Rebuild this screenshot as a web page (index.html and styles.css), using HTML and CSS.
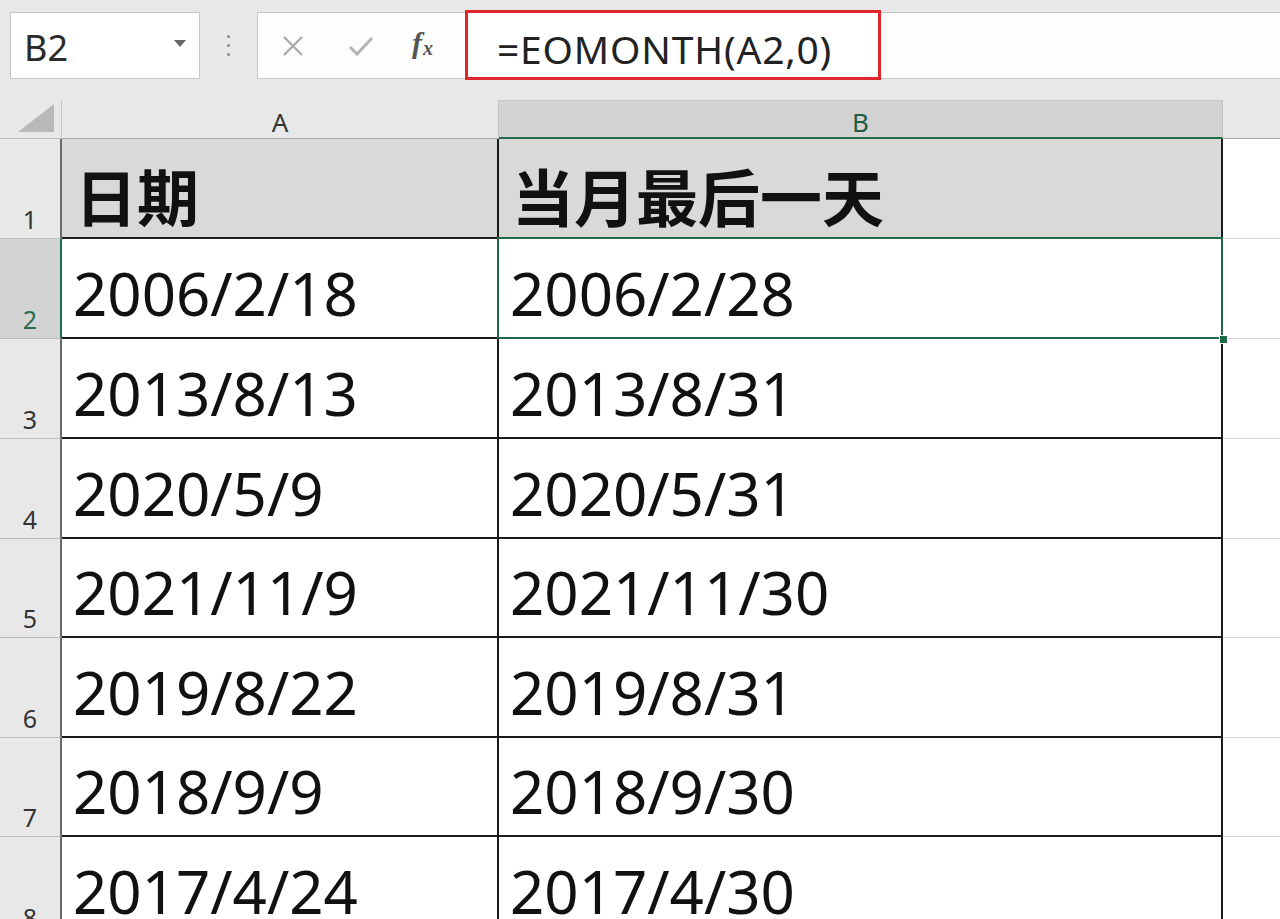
FILE: index.html
```html
<!DOCTYPE html>
<html lang="zh">
<head>
<meta charset="utf-8">
<title>EOMONTH</title>
<link rel="stylesheet" href="styles.css">
</head>
<body>
<div class="app">
  <div class="formula-row">
    <div class="namebox">
      <span class="name">B2</span>
      <svg class="caret" width="12" height="8" viewBox="0 0 12 8"><path d="M0 0 H12 L6 7 Z" fill="#666"/></svg>
    </div>
    <div class="sep"><i></i><i></i><i></i></div>
    <div class="fbar">
      <div class="btns">
        <svg class="ico" width="22" height="22" viewBox="0 0 22 22"><path d="M2 2 L20 20 M20 2 L2 20" stroke="#a8a8a8" stroke-width="2.2" fill="none"/></svg>
        <svg class="ico" width="26" height="22" viewBox="0 0 26 22"><path d="M2 12 L9 19 L24 3" stroke="#b4b4b4" stroke-width="3" fill="none"/></svg>
        <span class="fx">f<sub>x</sub></span>
      </div>
      <div class="formula">=EOMONTH(A2,0)</div>
      <div class="rest"></div>
    </div>
  </div>

  <div class="sheet">
    <div class="corner"><svg width="36" height="28" viewBox="0 0 36 28"><path d="M36 0 V28 H0 Z" fill="#b9b9b9"/></svg></div>
    <div class="colhead">A</div>
    <div class="colhead sel">B</div>
    <div class="colhead blank"></div>

    <div class="rowhead">1</div>
    <div class="cell head">日期</div>
    <div class="cell head">当月最后一天</div>
    <div class="cell empty"></div>

    <div class="rowhead sel">2</div>
    <div class="cell">2006/2/18</div>
    <div class="cell active">2006/2/28<span class="handle"></span></div>
    <div class="cell empty"></div>

    <div class="rowhead">3</div>
    <div class="cell">2013/8/13</div>
    <div class="cell">2013/8/31</div>
    <div class="cell empty"></div>

    <div class="rowhead">4</div>
    <div class="cell">2020/5/9</div>
    <div class="cell">2020/5/31</div>
    <div class="cell empty"></div>

    <div class="rowhead">5</div>
    <div class="cell">2021/11/9</div>
    <div class="cell">2021/11/30</div>
    <div class="cell empty"></div>

    <div class="rowhead">6</div>
    <div class="cell">2019/8/22</div>
    <div class="cell">2019/8/31</div>
    <div class="cell empty"></div>

    <div class="rowhead">7</div>
    <div class="cell">2018/9/9</div>
    <div class="cell">2018/9/30</div>
    <div class="cell empty"></div>

    <div class="rowhead">8</div>
    <div class="cell">2017/4/24</div>
    <div class="cell">2017/4/30</div>
    <div class="cell empty"></div>
  </div>
</div>
</body>
</html>
```

FILE: styles.css
```css
* { box-sizing: border-box; }
html, body {
  margin: 0;
  padding: 0;
  width: 1280px;
  height: 919px;
  overflow: hidden;
  background: #e8e8e8;
  font-family: "Noto Sans", "Noto Sans CJK SC", sans-serif;
  color: #111;
}
.app { width: 1280px; height: 919px; overflow: hidden; }

/* formula bar */
.formula-row {
  height: 100px;
  display: flex;
  align-items: flex-start;
  padding: 12px 0 0 10px;
}
.namebox {
  width: 190px;
  height: 67px;
  background: #fff;
  border: 1px solid #c8c8c8;
  display: flex;
  align-items: center;
  justify-content: space-between;
  padding: 0 13px 0 13px;
}
.name {
  font-size: 36px;
  color: #2a2a2a;
  line-height: 1;
  padding-top: 4px;
}
.caret { margin-bottom: 4px; }
.sep {
  width: 57px;
  height: 67px;
  display: flex;
  flex-direction: column;
  align-items: center;
  justify-content: center;
  gap: 6px;
}
.sep i {
  display: block;
  width: 3px;
  height: 3px;
  border-radius: 50%;
  background: #8a8a8a;
}
.fbar {
  flex: 1;
  height: 67px;
  background: #fdfdfd;
  border: 1px solid #c8c8c8;
  border-right: none;
  display: flex;
  align-items: stretch;
}
.btns {
  width: 207px;
  display: flex;
  align-items: center;
  padding-left: 24px;
}
.btns .ico:nth-child(1) { margin-right: 44px; }
.btns .ico:nth-child(2) { margin-right: 38px; }
.fx {
  font-family: "Liberation Serif", "DejaVu Serif", serif;
  font-style: italic;
  font-weight: bold;
  font-size: 30px;
  color: #555;
  line-height: 1;
  margin-top: -6px;
}
.fx sub {
  font-size: 20px;
  vertical-align: -2px;
  margin-left: 1px;
}
.formula {
  width: 416px;
  margin: -3px 0 -2px 0;
  border: 3px solid #e0262b;
  background: #fff;
  font-size: 39px;
  color: #222;
  display: flex;
  align-items: center;
  padding: 6px 0 0 29px;
  line-height: 1;
  letter-spacing: 0.8px;
}
.rest { flex: 1; }

/* sheet */
.sheet {
  display: grid;
  grid-template-columns: 62px 437px 724px 57px;
  grid-template-rows: 39px 100px 100px 100px 100px 99px 100px 99px 100px;
}
.corner {
  background: #e8e8e8;
  border-right: 1px solid #c4c4c4;
  border-bottom: 1px solid #bdbdbd;
  display: flex;
  align-items: flex-end;
  justify-content: flex-end;
  padding: 0 7px 6px 0;
}
.colhead {
  background: #e8e8e8;
  border-right: 1px solid #c4c4c4;
  border-bottom: 1px solid #a8a8a8;
  display: flex;
  align-items: center;
  justify-content: center;
  font-size: 26px;
  color: #333;
  line-height: 1;
  padding-top: 6px;
}
.colhead.sel {
  background: #d3d3d3;
  color: #1f5e43;
  border-bottom: 2px solid #1f6b48;
  border-top: 1px solid #c8c8c8;
}
.colhead.blank {
  background: #e8e8e8;
  border-right: none;
}
.rowhead {
  background: #e8e8e8;
  border-right: 2px solid #6a6a6a;
  border-bottom: 1px solid #bcbcbc;
  display: flex;
  align-items: flex-end;
  justify-content: center;
  font-size: 25px;
  color: #333;
  line-height: 1;
  padding: 0 0 6px 0;
}
.rowhead.sel {
  background: #d3d3d3;
  color: #2a6a4d;
  border-right: 2px solid #1f6b48;
}
.cell {
  background: #fff;
  border-right: 2px solid #1b1b1b;
  border-bottom: 2px solid #1b1b1b;
  display: flex;
  align-items: flex-end;
  padding: 0 0 14px 11px;
  font-size: 60px;
  line-height: 60px;
  color: #111;
  white-space: nowrap;
  overflow: visible;
}
.cell.head {
  background: #d9d9d9;
  font-family: "Noto Sans CJK SC", sans-serif;
  font-weight: bold;
  font-size: 62px;
  line-height: 62px;
  padding: 0 0 11px 13px;
}
.cell.empty {
  border-right: none;
  border-bottom: 1px solid #d6d6d6;
}
.cell.active {
  position: relative;
}
.cell.active::after {
  content: "";
  position: absolute;
  left: -2px;
  top: -2px;
  right: -2px;
  bottom: -2px;
  border: 2px solid #1f6b48;
  pointer-events: none;
}
.handle {
  position: absolute;
  right: -7px;
  bottom: -7px;
  width: 9px;
  height: 9px;
  background: #1f6b48;
  border: 1px solid #fff;
  z-index: 2;
}
```
